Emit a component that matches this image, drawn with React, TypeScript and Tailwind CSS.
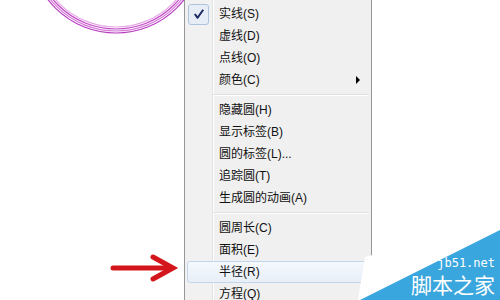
import type { ReactNode } from 'react'

const font = '"Liberation Sans", "Noto Sans CJK SC", sans-serif'

type Item = { label: string; checked?: boolean; sub?: boolean; hot?: boolean }

const groups: Item[][] = [
  [
    { label: '实线(S)', checked: true },
    { label: '虚线(D)' },
    { label: '点线(O)' },
    { label: '颜色(C)', sub: true },
  ],
  [
    { label: '隐藏圆(H)' },
    { label: '显示标签(B)' },
    { label: '圆的标签(L)...' },
    { label: '追踪圆(T)' },
    { label: '生成圆的动画(A)' },
  ],
  [
    { label: '圆周长(C)' },
    { label: '面积(E)' },
    { label: '半径(R)', hot: true },
    { label: '方程(Q)' },
  ],
]

function Row({ item }: { item: Item }) {
  return (
    <div
      className={`mx-[2px] h-[22px] shrink-0 rounded-[3px] border flex items-center ${
        item.hot
          ? 'border-[#c3d6ec] bg-[linear-gradient(to_bottom,#f5f9fd,#e8eff8)]'
          : 'border-transparent'
      }`}
    >
      <div className="w-[21px] h-[21px] flex items-center justify-center">
        {item.checked && (
          <div className="w-[21px] h-[21px] rounded-[3px] border border-[#aec3dc] bg-[#e6edf7] flex items-center justify-center">
            <svg width="12" height="12" viewBox="0 0 12 12">
              <path d="M1.8 6 L4.6 9.8 L10.2 1.8" fill="none" stroke="#1c2860" strokeWidth="2" strokeLinejoin="round" />
            </svg>
          </div>
        )}
      </div>
      <span className="ml-[10px] text-[12px] text-[#111] leading-none">{item.label}</span>
      {item.sub && (
        <div className="ml-auto mr-[8px] w-0 h-0 border-y-[4px] border-y-transparent border-l-[4px] border-l-black" />
      )}
    </div>
  )
}

function Separator() {
  return (
    <div className="ml-[28px] mr-[2px] h-[8px] shrink-0 flex flex-col justify-center">
      <div className="h-px bg-[#e0e0e0]" />
      <div className="h-px bg-white" />
    </div>
  )
}

function Circle() {
  const rings: [number, string][] = [
    [80, '#e6a8e6'],
    [82, '#c048c6'],
    [84, '#d27ad6'],
    [86, '#b83cc0'],
  ]
  return (
    <svg width="184" height="300" className="block">
      {rings.map(([r, c]) => (
        <circle key={r} cx="116" cy="-53" r={r} fill="none" stroke={c} strokeWidth="1.2" />
      ))}
      <line x1="113" y1="268" x2="166" y2="268" stroke="#d4161c" strokeWidth="5" strokeLinecap="round" />
      <polyline points="153,257 173,268 153,279" fill="none" stroke="#d4161c" strokeWidth="5" strokeLinecap="round" strokeLinejoin="miter" />
    </svg>
  )
}

function Watermark(): ReactNode {
  return (
    <div className="absolute right-0 bottom-0 w-[145px] h-[80px] pointer-events-none">
      <svg width="145" height="80" className="absolute inset-0">
        <polygon points="10,37 145,2 145,80 3,80" fill="#ffffff" />
        <polygon points="5,80 145,10 145,80" fill="#3aa6de" />
      </svg>
      <div className="absolute right-[5px] top-[37px] flex flex-col items-end gap-[2px] text-white">
        <div className="text-[12px] leading-[13px]" style={{ fontFamily: '"DejaVu Sans Mono", monospace' }}>
          jb51.net
        </div>
        <div className="text-[21px] leading-[24px]" style={{ fontFamily: '"Noto Sans CJK SC", sans-serif' }}>
          脚本之家
        </div>
      </div>
    </div>
  )
}

export default function App() {
  return (
    <div className="relative w-[500px] h-[300px] overflow-hidden bg-white flex" style={{ fontFamily: font }}>
      <div className="w-[184px] shrink-0">
        <Circle />
      </div>
      <div className="w-[188px] h-full shrink-0 border-x border-[#979797] pt-[3px] flex flex-col bg-[linear-gradient(to_right,#f1f1f1_0,#f1f1f1_27px,#e2e3e3_27px,#e2e3e3_28px,#ffffff_28px,#ffffff_29px,#f0f0f0_29px)]">
        {groups.map((g, gi) => (
          <div key={gi} className="flex flex-col">
            {gi > 0 && <Separator />}
            {g.map(it => <Row key={it.label} item={it} />)}
          </div>
        ))}
      </div>
      <Watermark />
    </div>
  )
}
